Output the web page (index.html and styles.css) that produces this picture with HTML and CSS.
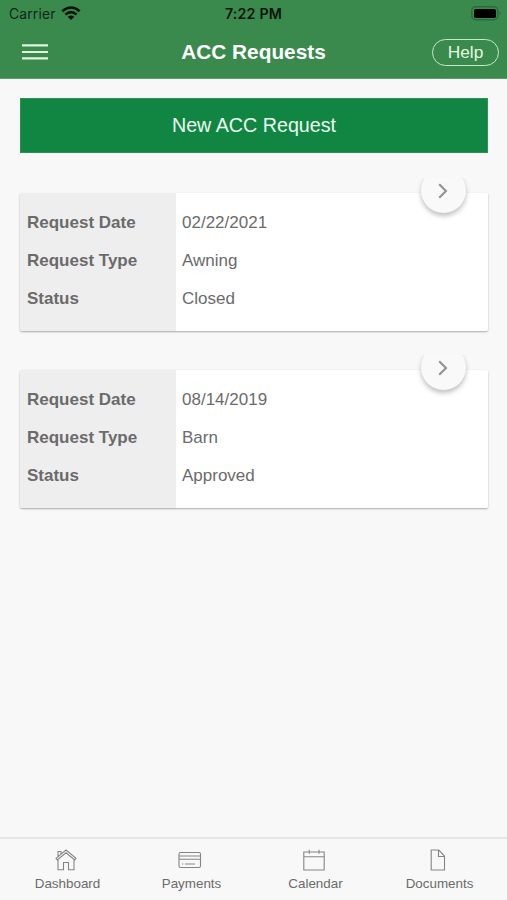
FILE: index.html
```html
<!DOCTYPE html>
<html lang="en">
<head>
<meta charset="utf-8">
<title>ACC Requests</title>
<link rel="stylesheet" href="styles.css">
</head>
<body>
<header class="header">
  <div class="status">
    <div class="carrier"><span>Carrier</span>
      <svg width="20" height="15" viewBox="0 0 20 15" fill="none" stroke="#07130a" stroke-width="2.6"><path d="M1.3 5.2Q10-2.2 18.7 5.2M4.4 8.6Q10 3.6 15.6 8.6"/><path d="M10 14L6.7 10.8Q10 8.3 13.3 10.8Z" fill="#07130a" stroke="none"/></svg>
    </div>
    <div class="time">7:22 PM</div>
    <svg class="battery" width="31" height="15" viewBox="0 0 31 15"><rect x=".8" y=".8" width="26" height="13" rx="4" fill="none" stroke="#2c6a3b" stroke-width="1.4"/><rect x="3" y="3" width="22" height="9" rx="1.8" fill="#000"/><path d="M28.5 5Q31 7.2 28.5 9.5Z" fill="#2c6a3b"/></svg>
  </div>
  <div class="nav">
    <svg class="menu" width="26" height="16" viewBox="0 0 26 16" stroke="#e2f8e0" stroke-width="2.2"><path d="M0 1.3H26M0 8H26M0 14.4H26"/></svg>
    <h1>ACC Requests</h1>
    <button class="help">Help</button>
  </div>
</header>
<main>
  <button class="new">New ACC Request</button>
  <section class="card">
    <dl>
      <dt>Request Date</dt><dd>02/22/2021</dd>
      <dt>Request Type</dt><dd>Awning</dd>
      <dt>Status</dt><dd>Closed</dd>
    </dl>
    <span class="open"><svg width="10" height="16" viewBox="0 0 10 16" fill="none" stroke="#929292" stroke-width="2.1"><path d="M1.2 1.2L8 8L1.2 14.8"/></svg></span>
  </section>
  <section class="card">
    <dl>
      <dt>Request Date</dt><dd>08/14/2019</dd>
      <dt>Request Type</dt><dd>Barn</dd>
      <dt>Status</dt><dd>Approved</dd>
    </dl>
    <span class="open"><svg width="10" height="16" viewBox="0 0 10 16" fill="none" stroke="#929292" stroke-width="2.1"><path d="M1.2 1.2L8 8L1.2 14.8"/></svg></span>
  </section>
</main>
<nav class="tabs">
  <div class="tab"><svg class="home" width="24" height="24" viewBox="0 0 24 24"><path d="M4 12V21.8H9.5V14.5H14.5V21.8H20V12M2 10.3L12 2L22 10.3L20.7 12L12 4.8L3.3 12ZM4 8.5V3.5H7V6"/></svg><span>Dashboard</span></div>
  <div class="tab"><svg class="pay" width="24" height="24" viewBox="0 0 24 24"><rect x="1" y="4.5" width="21.5" height="15" rx="1.5"/><path d="M1 8H22.5M1 11.3H22.5M4 16H5.2M7 16H17"/></svg><span>Payments</span></div>
  <div class="tab"><svg class="cal" width="24" height="24" viewBox="0 0 24 24"><path d="M1.8 4H22.2V22H1.8ZM1.8 8.7H22.2M7.3 1.8V5.8M17 1.8V5.8"/></svg><span>Calendar</span></div>
  <div class="tab"><svg class="doc" width="24" height="24" viewBox="0 0 24 24"><path d="M5.2 2H12.8L18.5 8V22H5.2ZM12.5 2V8.5H18.5"/></svg><span>Documents</span></div>
</nav>
</body>
</html>
```

FILE: styles.css
```css
* { box-sizing: border-box; }
body {
  margin: 0;
  height: 900px;
  display: flex;
  flex-direction: column;
  overflow: hidden;
  background: #f8f8f8;
  color: #6b6b6b;
  font-family: "Liberation Sans", Arial, sans-serif;
}
button { font-family: inherit; padding: 0; }
svg { display: block; }
.header { height: 79px; background: #3a894d; border-bottom: 1px solid #5c9e6b; }
.status {
  height: 27px;
  display: grid;
  grid-template-columns: 1fr auto 1fr;
  align-items: center;
  padding: 0 5px 0 9px;
  font: 13.8px Inter, sans-serif;
  color: #102717;
}
.carrier { display: flex; align-items: center; gap: 5px; letter-spacing: .2px; }
.time { font-weight: 600; font-size: 14.2px; letter-spacing: .2px; margin-left: -4px; color: #07130a; }
.battery { justify-self: end; }
.nav {
  height: 49px;
  display: grid;
  grid-template-columns: 1fr auto 1fr;
  align-items: center;
  padding: 0 8px 0 22px;
}
h1 { margin: 0 0 0 -14px; font-size: 20.8px; line-height: 24px; color: #fff; }
.help {
  justify-self: end;
  width: 67px;
  height: 27px;
  margin-top: 2px;
  border: 1.5px solid #c5e8c5;
  border-radius: 14px;
  background: none;
  color: #e2f8e0;
  font-size: 17.3px;
}
main { flex: 1; padding: 19px 19px 0 20px; }
.new {
  display: block;
  width: 468px;
  height: 55px;
  border: 1px solid #2b9454;
  background: #118542;
  color: #eafff0;
  font-size: 19.7px;
}
.card {
  position: relative;
  height: 138px;
  margin-top: 40px;
  border-radius: 2px;
  background: linear-gradient(90deg, #eee 156px, #fff 156px);
  box-shadow: 0 1px 2px rgba(0, 0, 0, .32);
}
.card + .card { margin-top: 39px; }
dl {
  display: grid;
  grid-template-columns: 155px 1fr;
  grid-auto-rows: 38px;
  align-items: center;
  margin: 0;
  padding: 11px 0 0 7px;
  font-size: 17px;
}
dt { font-weight: bold; }
dd { margin: 0; }
.open {
  position: absolute;
  top: -25px;
  right: 22px;
  width: 45px;
  height: 45px;
  display: grid;
  place-items: center;
  border-radius: 50%;
  background: #f9f9f9;
  box-shadow: 0 3px 5px rgba(0, 0, 0, .25);
  clip-path: inset(10px -10px -12px -10px);
}
.open svg { margin-right: 2px; }
.tabs {
  height: 63px;
  display: flex;
  padding: 0 5.5px;
  border-top: 2px solid #e7e7e7;
  font-size: 13.4px;
}
.tab {
  width: 124px;
  padding-top: 9px;
  display: flex;
  flex-direction: column;
  align-items: center;
}
.tab svg { margin-right: 4px; fill: none; stroke: #858585; stroke-width: 1.1; }
.tab span { margin-top: 4px; line-height: 16px; }
```
